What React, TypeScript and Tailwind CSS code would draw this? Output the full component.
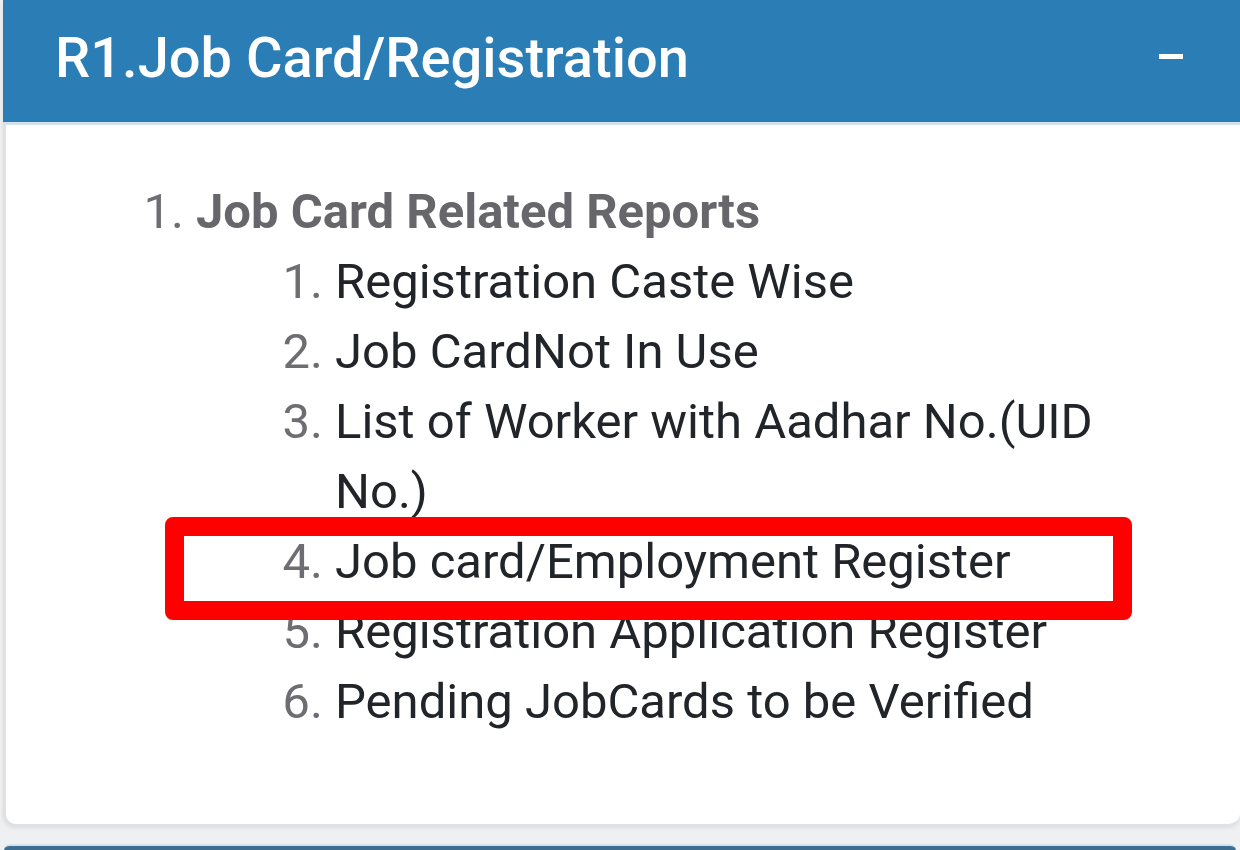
import React from "react";

const items = [
  "Registration Caste Wise",
  "Job CardNot In Use",
  "List of Worker with Aadhar No.(UID No.)",
  "Job card/Employment Register",
  "Registration Application Register",
  "Pending JobCards to be Verified",
];

export default function App() {
  return (
    <div className="relative w-[1240px] h-[850px] overflow-hidden bg-[#eff0f2] font-['Roboto','Liberation_Sans',sans-serif]">
      <div className="ml-[3px] bg-white rounded-b-[12px] border-l-[3px] border-b-[2px] border-[#e1e1e1] shadow-[0_2px_4px_rgba(0,0,0,0.08)]">
        <div className="h-[122px] -ml-[3px] bg-[#2b7db6] flex items-center justify-between pl-[52px] pr-[57px] pb-[6px]">
          <span className="text-white text-[56px] font-medium leading-none tracking-[0px]">R1.Job Card/Registration</span>
          <span className="block w-[24px] h-[5px] bg-white mt-[-4px]"></span>
        </div>
        <div className="h-[3px] bg-[#d6e2eb] -ml-[3px]"></div>
        <div className="pt-[52px] pb-[87px] pr-[100px]">
          <ol className="list-decimal pl-[190px] text-[49px] leading-[70px] marker:text-[#6d6d72]">
            <li>
              <b className="font-bold text-[#67676b]">Job Card Related Reports</b>
              <ol className="list-decimal pl-[139px] text-[#212428] marker:text-[#6d6d72]">
                {items.map((t) => (
                  <li key={t}>{t}</li>
                ))}
              </ol>
            </li>
          </ol>
        </div>
      </div>
      <div className="mt-[18px] mx-[4px] h-[8px] border-t-[2px] border-[#d4e2ec] bg-[#3e6d90] rounded-t-[6px]"></div>
      <div className="absolute left-[165px] top-[517px] w-[967px] h-[103px] border-[19px] border-[#ff0000] rounded-[8px]"></div>
    </div>
  );
}
